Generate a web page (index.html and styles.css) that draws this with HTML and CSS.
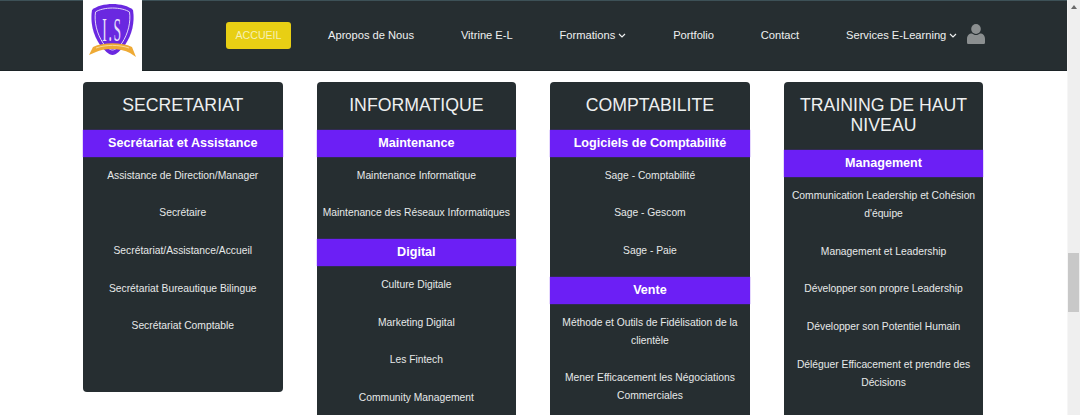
FILE: index.html
```html
<!DOCTYPE html>
<html lang="fr">
<head>
<meta charset="utf-8">
<title>Formations</title>
<link rel="stylesheet" href="styles.css">
</head>
<body>
<div class="page">
  <header class="nav">
    <div class="logo">
      <svg width="59" height="71" viewBox="0 0 59 71">
        <path d="M29.5 4 C37 4 46 6 50 10 C52 22 49 35 42 45 C38 50 33 55 29.5 55 C26 55 21 50 17 45 C10 35 7 22 9 10 C13 6 22 4 29.5 4Z" fill="#6a28e0"/>
        <path d="M29.5 8 C36 8 43 9.500 46.500 12 C48 22 45 34 39 43 C36 47 32 50 29.500 50 C27 50 23 47 20 43 C14 34 11 22 12.500 12 C16 9.500 23 8 29.500 8Z" fill="none" stroke="#e2d6f7" stroke-width="1"/>
        <text class="mono" text-anchor="middle" transform="translate(29.500 41) scale(.85 2.100)">I.S</text>
        <path d="M6 55 L10 47 C20 42 39 42 49 47 L53 57 L47 53 C38 48 21 48 13 52Z" fill="#eeaa35"/>
        <path d="M13 48 C23 44.500 36 44.500 46 48" fill="none" stroke="#f7d998" stroke-width="1"/>
      </svg>
    </div>
    <nav class="menu">
      <a class="item active">ACCUEIL</a>
      <a class="item">Apropos de Nous</a>
      <a class="item">Vitrine E-L</a>
      <a class="item">Formations <svg class="chev" viewBox="0 0 8 5"><path d="M1 1l3 3 3-3"/></svg></a>
      <a class="item">Portfolio</a>
      <a class="item">Contact</a>
      <a class="item services">Services E-Learning <svg class="chev" viewBox="0 0 8 5"><path d="M1 1l3 3 3-3"/></svg></a>
      <svg class="user" viewBox="0 0 18 20"><ellipse cx="9" cy="5" rx="4.800" ry="5"/><path d="M0 18.500v-3.500c0-3.500 2-5.500 5-5.500 1 .8 2.500 1.500 4 1.500s3-.7 4-1.500c3 0 5 2 5 5.500v3.500c0 1-.7 1.500-1.500 1.500h-15c-.8 0-1.500-.5-1.500-1.500z"/></svg>
    </nav>
  </header>
  <main class="cards">
    <section class="card short">
      <h2>SECRETARIAT</h2>
      <h3>Secrétariat et Assistance</h3>
      <ul>
        <li>Assistance de Direction/Manager</li>
        <li>Secrétaire</li>
        <li>Secrétariat/Assistance/Accueil</li>
        <li>Secrétariat Bureautique Bilingue</li>
        <li>Secrétariat Comptable</li>
      </ul>
    </section>
    <section class="card">
      <h2>INFORMATIQUE</h2>
      <h3>Maintenance</h3>
      <ul>
        <li>Maintenance Informatique</li>
        <li>Maintenance des Réseaux Informatiques</li>
      </ul>
      <h3>Digital</h3>
      <ul>
        <li>Culture Digitale</li>
        <li>Marketing Digital</li>
        <li>Les Fintech</li>
        <li>Community Management</li>
      </ul>
    </section>
    <section class="card">
      <h2>COMPTABILITE</h2>
      <h3>Logiciels de Comptabilité</h3>
      <ul>
        <li>Sage - Comptabilité</li>
        <li>Sage - Gescom</li>
        <li>Sage - Paie</li>
      </ul>
      <h3>Vente</h3>
      <ul>
        <li>Méthode et Outils de Fidélisation de la clientèle</li>
        <li>Mener Efficacement les Négociations Commerciales</li>
      </ul>
    </section>
    <section class="card">
      <h2>TRAINING DE HAUT NIVEAU</h2>
      <h3>Management</h3>
      <ul>
        <li>Communication Leadership et Cohésion d'équipe</li>
        <li>Management et Leadership</li>
        <li>Développer son propre Leadership</li>
        <li>Développer son Potentiel Humain</li>
        <li>Déléguer Efficacement et prendre des Décisions</li>
        <li>Présenter Efficacement son Management</li>
      </ul>
    </section>
  </main>
</div>
<div class="scrollbar"><span class="arrow"></span><span class="thumb"></span></div>
</body>
</html>
```
FILE: styles.css
```css
* { box-sizing: border-box; }
html, body { margin: 0; height: 415px; overflow: hidden; background: #fff; }
body { display: flex; font-family: "Liberation Sans", Arial, sans-serif; }
.page { width: 1067px; height: 415px; overflow: hidden; flex: none; }
.nav { height: 71px; background: #262e31; border-top: 1px solid #3d5157; border-bottom: 1px solid #1c2326; display: flex; padding-left: 83px; }
.logo { width: 59px; height: 71px; margin-top: -1px; background: #fff; flex: none; }
.logo svg { display: block; }
.mono { font-family: "Liberation Serif", serif; font-size: 16px; fill: #e9e0fa; letter-spacing: 2px; }
.menu { display: flex; align-items: center; height: 68px; padding-left: 84px; font-size: 11.150px; color: #eef0f0; gap: 46.800px; }
.item { white-space: nowrap; }
.active { background: #e8cf14; color: #f6f0b4; width: 65px; height: 27px; line-height: 27px; text-align: center; border-radius: 3px; margin-right: -9.800px; font-size: 10.600px; }
.chev { width: 8px; height: 5px; fill: none; stroke: #eef0f0; stroke-width: 1.200; vertical-align: 1px; }
.services { margin-right: -37.500px; }
.user { width: 18px; height: 20px; fill: #8b8f90; margin-bottom: 3px; }
.cards { display: flex; gap: 34.100px; padding: 11px 0 0 83px; align-items: flex-start; }
.card { width: 199.500px; background: #262e31; border-radius: 4px; color: #eef0f0; text-align: center; flex: none; }
.short { height: 310px; }
h2 { margin: 0; padding: 13px 6px 14.600px; font-size: 17.700px; line-height: 20.400px; font-weight: 400; }
h3 { margin: 0; height: 27px; line-height: 27.500px; background: #6c1ff5; color: #fff; font-size: 12.600px; font-weight: 700; box-shadow: 0 0 1px #6c1ff5; }
ul { list-style: none; margin: 0 0 7px; padding: 0; font-size: 10.300px; line-height: 18px; color: #e6e9e9; }
li { padding: 9.500px 3px 10.200px; }
.scrollbar { width: 13px; height: 415px; background: #efefef; border-left: 1px solid #f6f6f6; position: relative; flex: none; }
.thumb { position: absolute; top: 253px; left: 0; width: 11px; height: 59px; background: #c8c8c8; }
.arrow { position: absolute; top: 5px; left: 2.500px; width: 0; height: 0; border-left: 3px solid transparent; border-right: 3px solid transparent; border-bottom: 4px solid #6a6a6a; }
```
